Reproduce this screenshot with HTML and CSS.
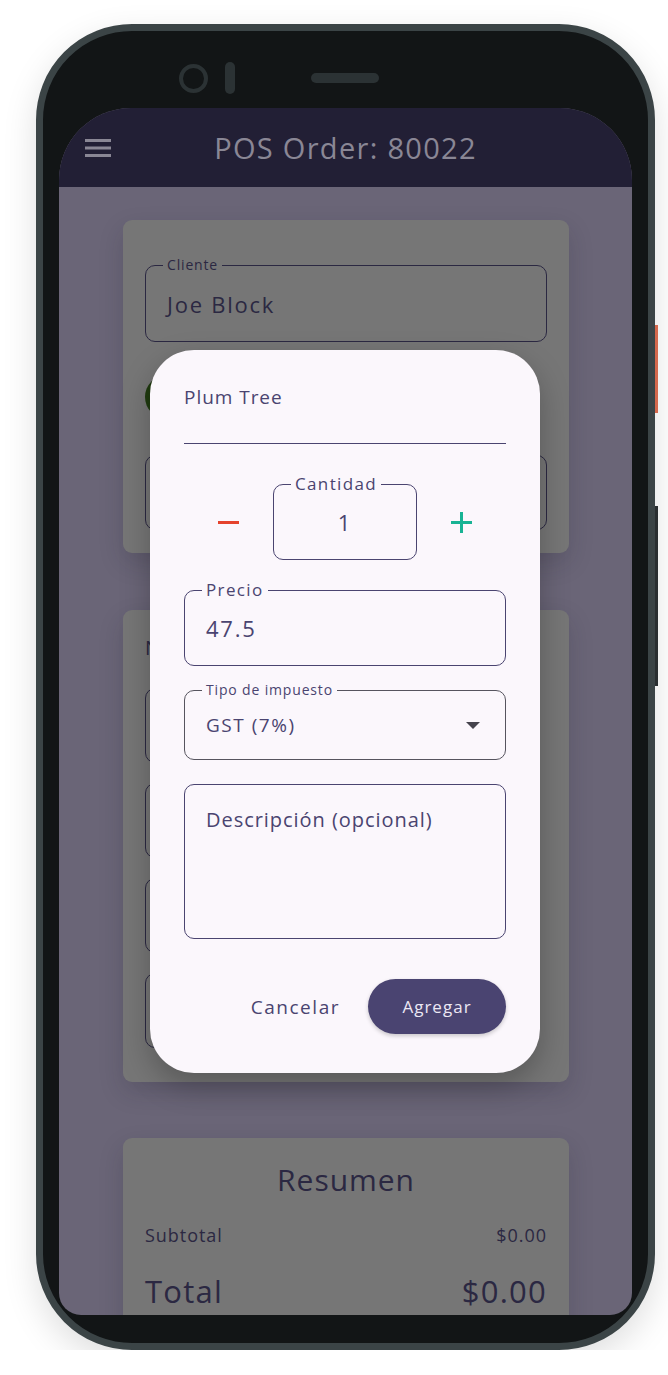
FILE: index.html
```html
<!DOCTYPE html>
<html>
<head>
    <title>POS Order</title>
    <link rel="stylesheet" href="styles.css">
</head>
<body>
    <div class="phone">
        <span class="side-key key-power"></span>
        <span class="side-key key-volume"></span>

        <div class="sensors">
            <span class="camera"></span>
            <span class="flash"></span>
            <span class="speaker"></span>
        </div>

        <div class="screen">
            <header class="app-bar">
                <svg class="menu-icon" width="26" height="20" viewBox="0 0 26 20">
                    <rect x="0" y="1" width="26" height="3" fill="#8a8795"/>
                    <rect x="0" y="8.5" width="26" height="3" fill="#8a8795"/>
                    <rect x="0" y="16" width="26" height="3" fill="#8a8795"/>
                </svg>
                <h1 class="app-title">POS Order: 80022</h1>
                <span class="bar-spacer"></span>
            </header>

            <main class="content">
                <section class="card card-client">
                    <div class="field field-dark">
                        <span class="field-label small">Cliente</span>
                        <span class="field-value">Joe Block</span>
                    </div>
                    <div class="avatar-row">
                        <span class="avatar"></span>
                    </div>
                    <div class="field field-dark field-plain"></div>
                </section>

                <section class="card card-items">
                    <h2 class="card-heading">N</h2>
                    <div class="field field-dark field-short"></div>
                    <div class="field field-dark field-short"></div>
                    <div class="field field-dark field-short"></div>
                    <div class="field field-dark field-short"></div>
                </section>

                <section class="card card-summary">
                    <h2 class="summary-title">Resumen</h2>
                    <div class="summary-row">
                        <span>Subtotal</span>
                        <span>$0.00</span>
                    </div>
                    <div class="summary-row summary-total">
                        <span>Total</span>
                        <span>$0.00</span>
                    </div>
                </section>
            </main>

            <!-- add product dialog -->
            <div class="dialog">
                <div class="name-field">Plum Tree</div>

                <div class="qty-row">
                    <button class="qty-button qty-minus" type="button">
                        <svg width="21" height="21" viewBox="0 0 21 21"><rect x="0" y="9" width="21" height="3" fill="#e5432d"/></svg>
                    </button>
                    <div class="field qty-field">
                        <span class="field-label">Cantidad</span>
                        <span class="field-value">1</span>
                    </div>
                    <button class="qty-button qty-plus" type="button">
                        <svg width="21" height="21" viewBox="0 0 21 21"><rect x="0" y="9" width="21" height="3" fill="#18b394"/><rect x="9" y="0" width="3" height="21" fill="#18b394"/></svg>
                    </button>
                </div>

                <div class="field price-field">
                    <span class="field-label">Precio</span>
                    <span class="field-value">47.5</span>
                </div>

                <div class="field tax-field">
                    <span class="field-label small">Tipo de impuesto</span>
                    <span class="field-value">GST (7%)</span>
                    <svg class="caret" width="14" height="7" viewBox="0 0 14 7"><path d="M0 0 L14 0 L7 7 Z" fill="#45434d"/></svg>
                </div>

                <div class="field desc-field">
                    <span class="placeholder">Descripción (opcional)</span>
                </div>

                <div class="dialog-actions">
                    <button class="text-button" type="button">Cancelar</button>
                    <button class="filled-button" type="button">Agregar</button>
                </div>
            </div>
        </div>
    </div>
</body>
</html>
```

FILE: styles.css
```css
body {
    margin: 0;
    background-color: #ffffff;
    font-family: "Open Sans", "Noto Sans", sans-serif;
    letter-spacing: 0.06em;
}

.phone {
    position: relative;
    box-sizing: border-box;
    width: 619px;
    height: 1326px;
    margin: 24px 0 0 36px;
    padding: 0 16px;
    border: 7px solid #3b4446;
    border-radius: 96px;
    background-color: #121516;
    box-shadow: 0 12px 34px rgba(0, 0, 0, 0.13);
}

.side-key {
    position: absolute;
    right: -10px;
    width: 3px;
}

.key-power {
    top: 294px;
    height: 88px;
    background-color: #d4684c;
}

.key-volume {
    top: 475px;
    height: 180px;
    background-color: #2a2f31;
}

.sensors {
    box-sizing: border-box;
    height: 77px;
    padding-top: 17px;
    display: flex;
    align-items: center;
}

.camera {
    box-sizing: border-box;
    width: 29px;
    height: 29px;
    margin-left: 120px;
    border: 4px solid #2b3234;
    border-radius: 50%;
}

.flash {
    width: 10px;
    height: 32px;
    margin-left: 17px;
    border-radius: 5px;
    background-color: #2b3234;
}

.speaker {
    width: 68px;
    height: 10px;
    margin-left: 76px;
    border-radius: 5px;
    background-color: #2b3234;
}

.screen {
    position: relative;
    height: 1207px;
    overflow: hidden;
    border-radius: 72px 72px 22px 22px;
    background-color: #6a6577;
}

.app-bar {
    height: 79px;
    padding: 0 26px;
    display: flex;
    align-items: center;
    background-color: #221f35;
}

.menu-icon {
    flex: none;
}

.app-title {
    flex: 1;
    margin: 0;
    text-align: center;
    font-size: 29px;
    font-weight: 400;
    letter-spacing: 0.045em;
    color: #8a8795;
}

.bar-spacer {
    width: 26px;
}

.content {
    padding: 33px 63px 0 64px;
}

.card {
    box-sizing: border-box;
    padding: 0 22px;
    border-radius: 9px;
    background-color: #767676;
    box-shadow: 0 10px 24px rgba(30, 26, 45, 0.18);
    color: #2b2842;
}

.card-client {
    height: 333px;
    padding-top: 45px;
}

.card-items {
    height: 472px;
    margin-top: 57px;
    padding-top: 24px;
}

.card-summary {
    height: 240px;
    margin-top: 56px;
    padding-top: 20px;
}

.field {
    position: relative;
    box-sizing: border-box;
    border: 1.3px solid #4a4470;
    border-radius: 10px;
    display: flex;
    align-items: center;
    padding: 0 21px;
    color: #4a4470;
}

.field-dark {
    height: 77px;
    border-color: #2b2842;
    color: #2b2842;
}

.field-label {
    position: absolute;
    top: -13px;
    left: 17px;
    padding: 0 4px;
    font-size: 17px;
    line-height: 24px;
    letter-spacing: 0.08em;
    background-color: #fbf7fc;
}

.field-label.small {
    top: -11px;
    font-size: 14px;
    line-height: 20px;
    letter-spacing: 0.06em;
}

.field-dark .field-label {
    background-color: #767676;
}

.field-value {
    font-size: 22px;
    letter-spacing: 0.08em;
}

.avatar-row {
    height: 40px;
    margin-top: 33px;
}

.avatar {
    display: block;
    width: 44px;
    height: 44px;
    border-radius: 50%;
    background-color: #1f3a0f;
}

.field-plain {
    height: 75px;
    margin-top: 40px;
}

.card-heading {
    margin: 0;
    font-size: 20px;
    font-weight: 400;
    line-height: 28px;
}

.field-short {
    width: 370px;
    height: 75px;
    margin-top: 20px;
}

.card-heading + .field-short {
    margin-top: 26px;
}

.summary-title {
    margin: 0;
    text-align: center;
    font-size: 30px;
    font-weight: 400;
    line-height: 44px;
}

.summary-row {
    display: flex;
    justify-content: space-between;
    margin-top: 20px;
    font-size: 18px;
    line-height: 26px;
}

.summary-total {
    margin-top: 22px;
    font-size: 31px;
    line-height: 42px;
    letter-spacing: 0.04em;
}

.dialog {
    position: absolute;
    left: 91px;
    top: 242px;
    box-sizing: border-box;
    width: 390px;
    height: 723px;
    padding: 0 34px;
    border-radius: 44px;
    background-color: #fbf7fc;
    box-shadow: 0 12px 30px rgba(0, 0, 0, 0.25);
    color: #4a4470;
}

.name-field {
    margin-top: 34px;
    padding-bottom: 33px;
    border-bottom: 1px solid #4a4470;
    font-size: 19px;
    line-height: 26px;
}

.qty-row {
    margin-top: 40px;
    display: flex;
    align-items: center;
    justify-content: center;
    gap: 34px;
}

.qty-button {
    padding: 0;
    border: none;
    background: none;
    display: flex;
    cursor: pointer;
}

.qty-field {
    width: 144px;
    height: 76px;
    justify-content: center;
}

.price-field {
    height: 76px;
    margin-top: 30px;
}

.tax-field {
    height: 70px;
    margin-top: 24px;
    border-color: #56545e;
}

.tax-field .field-value {
    flex: 1;
    font-size: 19px;
}

.caret {
    margin-right: 4px;
}

.desc-field {
    height: 155px;
    margin-top: 24px;
    align-items: flex-start;
}

.placeholder {
    margin-top: 21px;
    font-size: 20px;
    line-height: 28px;
}

.dialog-actions {
    margin-top: 40px;
    display: flex;
    justify-content: flex-end;
    align-items: center;
    gap: 16px;
}

.text-button {
    padding: 10px 12px;
    border: none;
    background: none;
    font-family: inherit;
    font-size: 19px;
    letter-spacing: 0.08em;
    color: #4a4470;
    cursor: pointer;
}

.filled-button {
    width: 138px;
    height: 55px;
    border: none;
    border-radius: 28px;
    background-color: #4a4471;
    box-shadow: 0 2px 4px rgba(0, 0, 0, 0.2);
    font-family: inherit;
    font-size: 17px;
    letter-spacing: 0.06em;
    color: #ece8f4;
    cursor: pointer;
}
```
